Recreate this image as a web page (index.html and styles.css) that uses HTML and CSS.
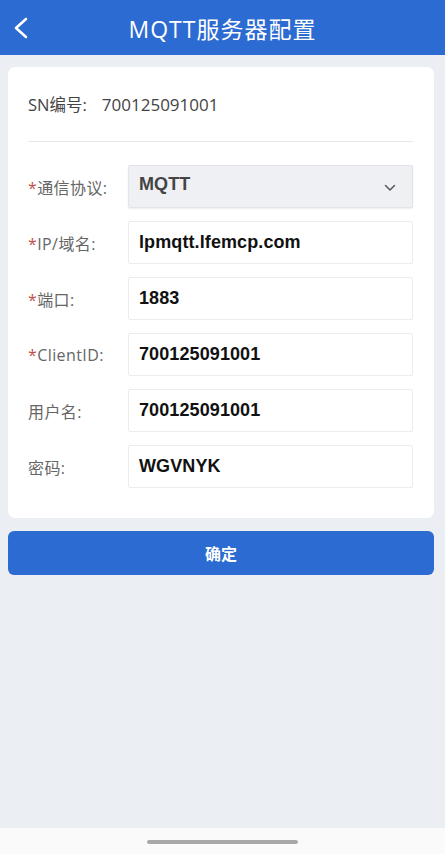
FILE: index.html
```html
<!DOCTYPE html>
<html lang="zh-CN">
<head>
    <meta charset="UTF-8">
    <meta name="viewport" content="width=device-width, initial-scale=1.0">
    <title>MQTT服务器配置</title>
    <link rel="stylesheet" href="styles.css">
</head>
<body>
    <header class="topbar">
        <a class="back" href="#">
            <svg width="16" height="22" viewBox="0 0 16 22">
                <path d="M13 2 L3 11 L13 20" fill="none" stroke="#fff" stroke-width="2.6" stroke-linecap="round" stroke-linejoin="round"/>
            </svg>
        </a>
        <h1>MQTT服务器配置</h1>
    </header>

    <main class="page">
        <section class="card">
            <div class="sn">SN编号:<span class="sn-value">700125091001</span></div>
            <div class="divider"></div>

            <form class="form" id="mqttForm">
                <div class="row">
                    <label><span class="req">*</span>通信协议:</label>
                    <div class="select">
                        <span>MQTT</span>
                        <svg width="12" height="8" viewBox="0 0 12 8">
                            <path d="M1.5 1.5 L6 6 L10.5 1.5" fill="none" stroke="#555" stroke-width="1.5" stroke-linecap="round"/>
                        </svg>
                    </div>
                </div>
                <div class="row">
                    <label><span class="req">*</span>IP/域名:</label>
                    <input type="text" value="lpmqtt.lfemcp.com">
                </div>
                <div class="row">
                    <label><span class="req">*</span>端口:</label>
                    <input type="text" value="1883">
                </div>
                <div class="row">
                    <label><span class="req">*</span>ClientID:</label>
                    <input type="text" value="700125091001">
                </div>
                <div class="row">
                    <label>用户名:</label>
                    <input type="text" value="700125091001">
                </div>
                <div class="row">
                    <label>密码:</label>
                    <input type="text" value="WGVNYK">
                </div>
            </form>
        </section>

        <button class="submit" type="submit" form="mqttForm">确定</button>
    </main>

    <footer class="navbar">
        <div class="handle"></div>
    </footer>
</body>
</html>
```

FILE: styles.css
```css
* {
    box-sizing: border-box;
}

html, body {
    height: 100%;
}

body {
    margin: 0;
    font-family: "Open Sans", "Noto Sans CJK SC", sans-serif;
    background: #ebeef2;
    color: #444;
    display: flex;
    flex-direction: column;
}

.topbar {
    height: 55px;
    background: #2c6bd1;
    display: flex;
    align-items: center;
    justify-content: center;
    position: relative;
}

.topbar h1 {
    margin: 0;
    color: #fff;
    font-size: 23px;
    font-weight: 400;
    letter-spacing: 1px;
}

.back {
    position: absolute;
    left: 13px;
    top: 17px;
}

.page {
    flex: 1;
    padding: 12px 11px 0 8px;
}

.card {
    background: #fff;
    border-radius: 7px;
    padding: 26px 21px 30px 20px;
}

.sn {
    font-size: 16.5px;
    color: #444;
    line-height: 24px;
}

.sn-value {
    margin-left: 15px;
    font-size: 17px;
}

.divider {
    height: 1px;
    background: #e6e8eb;
    margin: 24px 0 23px;
}

.form {
    display: flex;
    flex-direction: column;
    gap: 13px;
}

.row {
    display: flex;
    align-items: center;
}

.row label {
    width: 100px;
    font-size: 16px;
    letter-spacing: 0.4px;
    color: #666;
}

.req {
    color: #c0504d;
}

.row input,
.select {
    flex: 1;
    min-width: 0;
    height: 43px;
    border: 1px solid #ececec;
    border-radius: 2px;
    padding: 0 10px;
    font-family: "Liberation Sans", "Noto Sans CJK SC", sans-serif;
    font-size: 18px;
    font-weight: bold;
    letter-spacing: 0.1px;
    color: #111;
    background: #fff;
    outline: none;
}

.select {
    display: flex;
    align-items: center;
    justify-content: space-between;
    background: #eef0f3;
    border-color: #e2e4e7;
    color: #444;
    padding-bottom: 4px;
    box-shadow: 0 1px 2px rgba(0, 0, 0, 0.08);
}

.select svg {
    margin-right: 6px;
    margin-top: 6px;
}

.submit {
    display: block;
    width: 100%;
    height: 44px;
    margin-top: 13px;
    border: none;
    border-radius: 6px;
    background: #2c6bd1;
    color: #fff;
    font-family: "Noto Sans CJK SC", sans-serif;
    font-size: 16px;
    font-weight: bold;
}

.navbar {
    height: 26px;
    background: #fafafa;
    display: flex;
    justify-content: center;
    padding-top: 12px;
}

.handle {
    width: 151px;
    height: 4px;
    border-radius: 2px;
    background: #a8a8a8;
}
```
